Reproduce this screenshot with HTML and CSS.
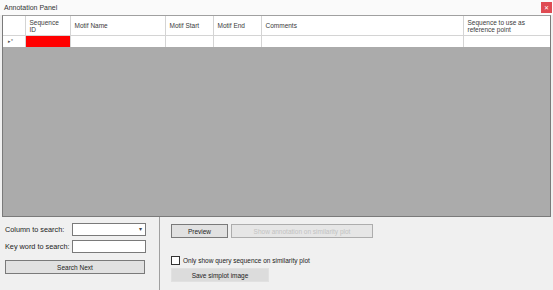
FILE: index.html
```html
<!DOCTYPE html>
<html lang="en">
<head>
    <meta charset="UTF-8">
    <title>Annotation Panel</title>
    <link rel="stylesheet" href="styles.css">
</head>
<body>
    <div class="window">
        <div class="titlebar">
            <span class="title">Annotation Panel</span>
            <span class="close">&#x2715;</span>
        </div>

        <div class="grid">
            <table class="grid-table">
                <colgroup>
                    <col style="width: 22px">
                    <col style="width: 45px">
                    <col style="width: 95px">
                    <col style="width: 48px">
                    <col style="width: 48px">
                    <col style="width: 202px">
                    <col>
                </colgroup>
                <tr class="head">
                    <th></th>
                    <th>Sequence<br>ID</th>
                    <th>Motif Name</th>
                    <th>Motif Start</th>
                    <th>Motif End</th>
                    <th>Comments</th>
                    <th>Sequence to use as<br>reference point</th>
                </tr>
                <tr class="data">
                    <td class="row-mark">&#9656;*</td>
                    <td class="selected"></td>
                    <td></td>
                    <td></td>
                    <td></td>
                    <td></td>
                    <td></td>
                </tr>
            </table>
        </div>

        <div class="bottom">
            <div class="search-panel">
                <div class="field">
                    <label>Column to search:</label>
                    <div class="combo"><span class="arrow">&#9662;</span></div>
                </div>
                <div class="field">
                    <label>Key word to search:</label>
                    <div class="textbox"></div>
                </div>
                <button class="btn btn-wide">Search Next</button>
            </div>
            <div class="plot-panel">
                <div class="btn-row">
                    <button class="btn btn-preview">Preview</button>
                    <button class="btn btn-disabled" disabled>Show annotation on similarity plot</button>
                </div>
                <label class="check">
                    <span class="box"></span>
                    Only show query sequence on similarity plot
                </label>
                <button class="btn btn-flat">Save simplot image</button>
            </div>
        </div>
    </div>
</body>
</html>
```

FILE: styles.css
```css
body {
    margin: 0;
    padding: 0;
    font-family: 'Liberation Sans', Arial, sans-serif;
    font-size: 7px;
    color: #222;
    background: #f0f0f0;
}

.window {
    width: 553px;
    height: 290px;
    background: #f0f0f0;
    display: flex;
    flex-direction: column;
    overflow: hidden;
}

.titlebar {
    height: 15px;
    display: flex;
    align-items: center;
    justify-content: space-between;
    padding: 0 1px 0 4px;
    background: #fafafa;
}

.title {
    color: #333;
}

.close {
    width: 11px;
    height: 11px;
    background: #df4a52;
    color: #fff;
    font-size: 6px;
    display: flex;
    align-items: center;
    justify-content: center;
}

.grid {
    margin: 0 2px;
    height: 200px;
    background: #ababab;
    border: 1px solid #7a7a7a;
    border-top-color: #a0a0a0;
}

.grid-table {
    border-collapse: collapse;
    width: 100%;
    background: #fff;
    table-layout: fixed;
}

.grid-table th,
.grid-table td {
    border: 1px solid #d4d4d4;
    padding: 0 0 0 4px;
    text-align: left;
    font-weight: normal;
    color: #3a3a3a;
    font-size: 6.5px;
    line-height: 7px;
    overflow: hidden;
    white-space: nowrap;
}

.grid-table .head th {
    height: 19px;
    border-top: none;
    vertical-align: middle;
}

.grid-table .data td {
    height: 11px;
    border-bottom: none;
}

.grid-table .head th:first-child,
.grid-table .data td:first-child {
    border-left: none;
}

.grid-table .head th:last-child,
.grid-table .data td:last-child {
    border-right: none;
}

.grid-table td.row-mark {
    font-size: 5px;
    color: #555;
    padding-left: 5px;
}

.grid-table td.selected {
    background: #ff0000;
}

.bottom {
    flex: 1;
    display: flex;
}

.search-panel {
    width: 154px;
    padding: 6px 0 0 5px;
    border-right: 1px solid #a0a0a0;
    display: flex;
    flex-direction: column;
    gap: 4px;
}

.field {
    display: flex;
    align-items: center;
    justify-content: space-between;
    padding-right: 13px;
}

.field label {
    font-size: 7.3px;
    color: #222;
}

.combo,
.textbox {
    width: 72px;
    height: 11px;
    background: #fff;
    border: 1px solid #7a7a7a;
    position: relative;
}

.arrow {
    position: absolute;
    right: 3px;
    top: 1px;
    font-size: 6px;
    color: #444;
}

.btn {
    font-family: 'Liberation Sans', Arial, sans-serif;
    font-size: 6.5px;
    height: 14px;
    padding: 0;
    background: #e1e1e1;
    border: 1px solid #7a7a7a;
    color: #222;
}

.btn-wide {
    width: 140px;
    margin-top: 3px;
}

.plot-panel {
    flex: 1;
    padding: 7px 0 0 11px;
    display: flex;
    flex-direction: column;
    align-items: flex-start;
}

.btn-row {
    display: flex;
    gap: 3px;
}

.btn-preview {
    width: 57px;
}

.btn-disabled {
    width: 142px;
    color: #c2c2c2;
    background: #e6e6e6;
    border-color: #adadad;
}

.check {
    display: flex;
    align-items: center;
    gap: 3px;
    margin-top: 18px;
    font-size: 6.5px;
    color: #222;
}

.box {
    width: 7px;
    height: 7px;
    background: #fff;
    border: 1px solid #333;
}

.btn-flat {
    width: 98px;
    margin-top: 3px;
    border-color: #e1e1e1;
    background: #dcdcdc;
}
```
